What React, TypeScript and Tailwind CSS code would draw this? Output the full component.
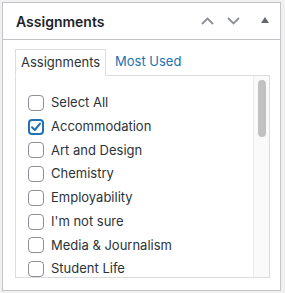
import React from "react";

const items = [
  { label: "Select All", checked: false },
  { label: "Accommodation", checked: true },
  { label: "Art and Design", checked: false },
  { label: "Chemistry", checked: false },
  { label: "Employability", checked: false },
  { label: "I'm not sure", checked: false },
  { label: "Media & Journalism", checked: false },
  { label: "Student Life", checked: false },
];

function Box({ checked }: { checked: boolean }) {
  if (checked) {
    return (
      <div className="w-[16px] h-[16px] rounded-[4px] border-2 border-[#2271b1] bg-white mr-[7px] shrink-0 flex items-center justify-center">
        <svg width="12" height="12" viewBox="0 0 12 12">
          <path d="M2 6.2 L4.8 9 L10 2.6" fill="none" stroke="#2271b1" strokeWidth="2" strokeLinecap="round" strokeLinejoin="round" />
        </svg>
      </div>
    );
  }
  return <div className="w-[16px] h-[16px] rounded-[4px] border border-[#8c8f94] bg-white mr-[7px] shrink-0" />;
}

export default function App() {
  return (
    <div className="w-[285px] h-[293px] bg-[#f0f0f1] pt-[2px] pl-[2px]" style={{ fontFamily: "Inter, 'Noto Sans', sans-serif" }}>
      <div className="w-[279px] h-[289px] border border-[#c3c4c7] bg-white flex flex-col">
        <div className="h-[37px] border-b border-[#c3c4c7] flex items-center pl-[13px] pr-[11px]">
          <div className="flex-1 text-[14px] font-semibold text-[#1d2327] leading-none pt-[1px]">Assignments</div>
          <svg width="13" height="8" viewBox="0 0 13 8" className="mr-[13px]">
            <path d="M1 7 L6.5 1.5 L12 7" fill="none" stroke="#8c8f94" strokeWidth="1.8" />
          </svg>
          <svg width="13" height="8" viewBox="0 0 13 8" className="mr-[21px]">
            <path d="M1 1 L6.5 6.5 L12 1" fill="none" stroke="#8c8f94" strokeWidth="1.8" />
          </svg>
          <svg width="8" height="6" viewBox="0 0 8 6" className="mb-[2px]">
            <path d="M0 6 L4 0 L8 6 Z" fill="#646970" />
          </svg>
        </div>
        <div className="pl-[12px] pt-[9px] flex flex-col">
          <div className="flex items-end relative z-10">
            <div className="w-[91px] h-[27px] border border-[#dcdcde] border-b-white bg-white flex items-center pl-[5px] text-[13px] text-[#2c3338] -mb-px">
              Assignments
            </div>
            <div className="ml-[9px] h-[26px] flex items-center text-[13px] text-[#2271b1]">Most Used</div>
          </div>
          <div className="w-[255px] h-[203px] border border-[#dcdcde] bg-white flex overflow-hidden">
            <div className="flex-1 pl-[12px] pt-[15px] flex flex-col">
              {items.map((it) => (
                <div key={it.label} className="h-[23.75px] flex items-center shrink-0 text-[13px] text-[#2c3338]">
                  <Box checked={it.checked} />
                  <span>{it.label}</span>
                </div>
              ))}
            </div>
            <div className="w-[16px] h-full border-l border-[#ebebeb] bg-[#fafafa] flex justify-center pt-[4px] pl-[1px]">
              <div className="w-[8px] h-[57px] rounded-full bg-[#c1c1c1]" />
            </div>
          </div>
        </div>
      </div>
    </div>
  );
}
